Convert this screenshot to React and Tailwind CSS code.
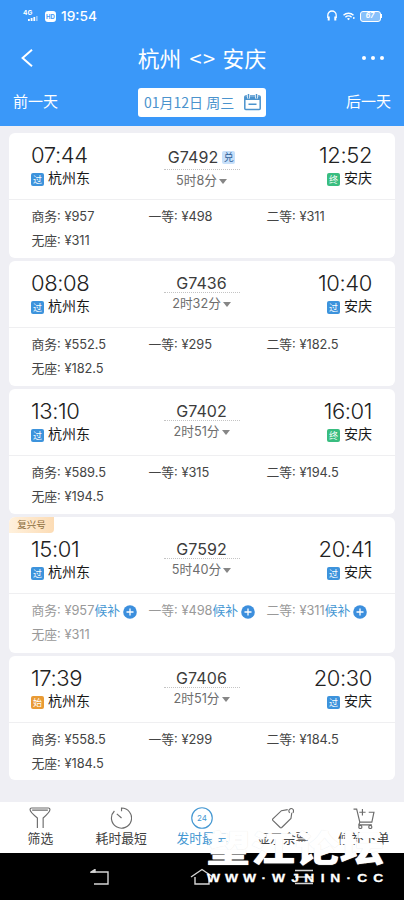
const trains = [
  {
    no: "G7492",
    exchange: true,
    duration: "5时8分",
    depart: "07:44",
    arrive: "12:52",
    fromTag: "过",
    toTag: "终",
    seats: [["商务", "957"], ["一等", "498"], ["二等", "311"], ["无座", "311"]],
    height: "h-[125px]",
  },
  {
    no: "G7436",
    duration: "2时32分",
    depart: "08:08",
    arrive: "10:40",
    fromTag: "过",
    toTag: "过",
    seats: [["商务", "552.5"], ["一等", "295"], ["二等", "182.5"], ["无座", "182.5"]],
    height: "h-[125px]",
  },
  {
    no: "G7402",
    duration: "2时51分",
    depart: "13:10",
    arrive: "16:01",
    fromTag: "过",
    toTag: "终",
    seats: [["商务", "589.5"], ["一等", "315"], ["二等", "194.5"], ["无座", "194.5"]],
    height: "h-[125px]",
  },
  {
    no: "G7592",
    fuxing: true,
    soldOut: true,
    duration: "5时40分",
    depart: "15:01",
    arrive: "20:41",
    fromTag: "过",
    toTag: "过",
    seats: [["商务", "957"], ["一等", "498"], ["二等", "311"], ["无座", "311"]],
    height: "h-[136px]",
  },
  {
    no: "G7406",
    duration: "2时51分",
    depart: "17:39",
    arrive: "20:30",
    fromTag: "始",
    toTag: "过",
    seats: [["商务", "558.5"], ["一等", "299"], ["二等", "184.5"], ["无座", "184.5"]],
    height: "h-[124px]",
  },
];

const tagColors = {
  过: "bg-[#3d93dc]",
  终: "bg-[#39bd80]",
  始: "bg-[#e99b35]",
};

function StatusBar() {
  return (
    <div className="flex h-8 items-center pr-[22px] pl-[23px] text-white">
      <div className="flex h-3 w-[15px] flex-col">
        <span className="h-[6px] text-[6.5px] leading-[6px] font-bold">4G</span>
        <svg className="ml-[5px] h-[5px] w-[10px]" viewBox="0 0 10 5" fill="currentColor">
          <path d="M0 3h1.8v2H0zM2.7 2h1.8v3H2.7zM5.4 1h1.8v4H5.4z" />
          <path d="M8.1 0h1.5v5H8.1z" opacity=".5" />
        </svg>
      </div>
      <span className="ml-[7px] flex h-[11px] w-[11px] items-center justify-center rounded-[3px] bg-white text-[6px] font-bold text-[#3a98f9]">
        HD
      </span>
      <span className="mt-[1px] ml-[5px] text-[13.7px] leading-none font-medium">19:54</span>
      <div className="ml-auto flex items-center">
        <svg className="h-3 w-[10px]" viewBox="0 0 10 12" fill="none" stroke="currentColor" strokeWidth="1.3">
          <path d="M.8 8V5.2a4.2 4.2 0 0 1 8.4 0V8" />
          <path d="M1.7 6.5v4M8.3 6.5v4" strokeWidth="2" />
        </svg>
        <svg className="ml-[6px] h-[9px] w-3" viewBox="0 0 12 9" fill="none" stroke="currentColor" strokeWidth="1.4">
          <path d="M.5 3.2a7.2 7.2 0 0 1 10 0M2.4 5.2a4.5 4.5 0 0 1 6.2 0" />
          <path d="M4 6.8a2.2 2.2 0 0 1 3 0L5.5 8.3z" fill="currentColor" stroke="none" />
          <circle cx="10.8" cy="6" r=".9" fill="currentColor" stroke="none" />
        </svg>
        <span className="ml-[5px] flex h-[11px] w-[21px] items-center justify-center rounded-[3px] border border-white bg-white/40 text-[7px] font-bold italic">
          67
        </span>
        <span className="h-1 w-[1.5px] bg-white" />
      </div>
    </div>
  );
}

function Header() {
  return (
    <header className="h-[126px] bg-[#3a98f9] text-white">
      <StatusBar />
      <div className="flex h-[52px] items-center justify-between pr-[20px] pl-[21px]">
        <svg className="h-[18px] w-3" viewBox="0 0 12 18" fill="none" stroke="currentColor" strokeWidth="2">
          <path d="M11 .8 1.6 9l9.4 8.2" />
        </svg>
        <h1 className="flex gap-[8px] pl-[9px] font-['Noto_Sans_CJK_SC'] text-[21.8px] leading-[54px]">
          <span>杭州</span>
          <span className="tracking-[1.5px]">&lt;&gt;</span>
          <span className="-ml-[2px]">安庆</span>
        </h1>
        <div className="flex gap-[5px]">
          <span className="h-1 w-1 rounded-full bg-white" />
          <span className="h-1 w-1 rounded-full bg-white" />
          <span className="h-1 w-1 rounded-full bg-white" />
        </div>
      </div>
      <div className="flex items-center justify-between px-[13px] pt-[4px] font-['Noto_Sans_CJK_SC'] text-[15px]">
        <span className="-mt-[3px] leading-[30px]">前一天</span>
        <div className="flex h-[29px] w-[128px] items-center justify-between rounded-[3px] bg-white pr-[5px] pl-[6px] text-[#4b93cd]">
          <span className="text-[14px] leading-[29px] whitespace-nowrap">01月12日 周三</span>
          <svg className="h-[17px] w-[17px]" viewBox="0 0 17 17" fill="none" stroke="currentColor" strokeWidth="1.5">
            <rect x=".8" y="2" width="15.4" height="13.6" rx="1" />
            <path d="M1 3h15v3H1z" fill="currentColor" stroke="none" />
            <path d="M4.5 0v4.5M12.5 0v4.5" stroke="#fff" strokeWidth="3" />
            <path d="M4.5 0v4.5M12.5 0v4.5M4.5 10.2h8" />
          </svg>
        </div>
        <span className="-mt-[3px] leading-[30px]">后一天</span>
      </div>
    </header>
  );
}

function Station({ tag, name }) {
  return (
    <div className="flex h-[19px] items-center gap-[4px]">
      <span
        className={`mt-[4px] flex h-[13px] w-[13px] items-center justify-center rounded-[2px] text-[9px] leading-none text-white ${tagColors[tag]}`}
      >
        {tag}
      </span>
      <span className="text-[14px] leading-[19px] text-[#181818]">{name}</span>
    </div>
  );
}

function Seat({ label, price, waitlist }) {
  return (
    <div className="flex h-[23.5px] items-center whitespace-nowrap">
      <span>
        {label}: ¥{price}
      </span>
      {waitlist && (
        <>
          <span className="text-[12.8px] text-[#4597d3]">候补</span>
          <svg className="mt-[2px] ml-[3px] h-[14px] w-[14px]" viewBox="0 0 14 14">
            <circle cx="7" cy="7" r="6.8" fill="#3c8fdd" />
            <path d="M3.5 7h7M7 3.5v7" stroke="#fff" strokeWidth="1.3" />
          </svg>
        </>
      )}
    </div>
  );
}

function TrainCard({ train }) {
  return (
    <section className={`flex shrink-0 flex-col rounded-[6px] bg-white ${train.height}`}>
      {train.fuxing && (
        <div className="-mb-[6px] flex h-[16px] w-[45px] shrink-0 items-center justify-center rounded-tl-[6px] rounded-br-[4px] bg-linear-to-r from-[#fff1dd] to-[#fcdcb5] text-[9.5px] leading-none text-[#8c6c3c]">
          复兴号
        </div>
      )}
      <div className="flex h-[67px] shrink-0 justify-between border-b border-[#efeff1] pr-[23px] pl-[22px]">
        <div className="w-[90px] pt-[10px]">
          <div className="h-[25px] text-[22px] leading-[25px] font-light tracking-[-0.4px] text-[#222]">
            {train.depart}
          </div>
          <Station tag={train.fromTag} name="杭州东" />
        </div>
        <div className={`flex w-[76px] flex-col items-center ${train.exchange ? "pt-[12px]" : "pt-[13px]"}`}>
          <div
            className={`flex w-full shrink-0 items-center justify-center border-b border-dotted border-[#c4c4c4] ${
              train.exchange ? "h-[25px]" : "h-[19px]"
            }`}
          >
            <span className="text-[16px] tracking-[0.1px] text-[#3c3c3c]">{train.no}</span>
            {train.exchange && (
              <span className="ml-[4px] flex h-[13px] w-[13px] shrink-0 items-center justify-center rounded-[2px] bg-[#c7e0fa] text-[10px] leading-none text-[#315f98]">
                兑
              </span>
            )}
          </div>
          <div className="flex h-[21px] items-center gap-[2px] text-[12.7px] text-[#6d6d6d]">
            <span>{train.duration}</span>
            <svg className="mt-[2px] h-[5px] w-2" viewBox="0 0 8 5" fill="#868686">
              <path d="M0 0h8L4 5z" />
            </svg>
          </div>
        </div>
        <div className="flex w-[90px] flex-col items-end pt-[10px]">
          <div className="h-[25px] text-[22px] leading-[25px] font-light tracking-[-0.4px] text-[#222]">
            {train.arrive}
          </div>
          <Station tag={train.toTag} name="安庆" />
        </div>
      </div>
      <div
        className={`grid grid-cols-[117px_118px_1fr] pt-[5px] pl-[22.5px] text-[12.8px] ${
          train.soldOut ? "text-[#999]" : "text-[#444]"
        }`}
      >
        {train.seats.map(([label, price]) => (
          <Seat key={label} label={label} price={price} waitlist={train.soldOut && label !== "无座"} />
        ))}
      </div>
    </section>
  );
}

const tabs = [
  {
    label: "筛选",
    icon: <path d="M8 20v-9.5Q1 5 1 2.5 1 1 2.5 1h16Q20 1 20 2.5q0 2.5-6.5 8V20M3 3h15" />,
  },
  {
    label: "耗时最短",
    icon: <path d="M11 4V1a9.6 9.6 0 1 1-6.8 2.8M6.5 6.5 11 10.5" />,
  },
  { label: "发时最早", active: true, icon: <circle cx="10.5" cy="10.5" r="9.8" /> },
  {
    label: "显示余票",
    icon: (
      <path d="M17 5.5q-2-2 .3-3.7 2-1 3 .8.6 1.5-.3 3M15 2.5 9 3.5.8 11.3q-.6.8 0 1.5l7 6.8q.8.6 1.5 0l8.8-8.6.8-5.5" />
    ),
  },
  {
    label: "候补下单",
    icon: (
      <>
        <path d="M.5 2h3l3 12.5h11.5L20 5h-5M6 5h6M9 2v6M6.5 14.5l-1 2.5H18" />
        <circle cx="7" cy="19" r="1.5" />
        <circle cx="16.5" cy="19" r="1.5" />
      </>
    ),
  },
];

function TabBar() {
  return (
    <nav className="grid h-[51px] grid-cols-5 bg-white">
      {tabs.map((tab) => (
        <div
          key={tab.label}
          className={`flex flex-col items-center pt-[5px] ${tab.active ? "text-[#4598d2]" : "text-[#3d3d3d]"}`}
        >
          <div className="relative h-[22px] w-[22px]">
            <svg
              className={tab.active ? "h-[22px] w-[22px]" : "h-[22px] w-[22px] text-[#6c6c6c]"}
              viewBox="0 0 21 21"
              fill="none"
              stroke="currentColor"
              strokeWidth="1.1"
            >
              {tab.icon}
            </svg>
            {tab.active && (
              <span className="absolute inset-0 flex items-center justify-center text-[8px]">24</span>
            )}
          </div>
          <span className="text-[12.8px] leading-[19px] whitespace-nowrap">{tab.label}</span>
        </div>
      ))}
    </nav>
  );
}

function SystemNav() {
  return (
    <div className="grid h-[47px] grid-cols-[1fr_1fr_1fr] items-center justify-items-center bg-black text-[#d5d5d5]">
      <svg className="ml-[66px] h-4 w-5" viewBox="0 0 20 16" fill="none" stroke="currentColor" strokeWidth="1.4">
        <path d="M1 3h17v12H4" />
        <path d="M1 3l4-2.5V3z" fill="currentColor" />
      </svg>
      <svg className="h-[18px] w-6" viewBox="0 0 24 18" fill="none" stroke="currentColor" strokeWidth="1.4">
        <path d="M1 9 12 1.5 23 9M5 9v7h14V9" />
      </svg>
      <svg className="mr-[65px] h-4 w-[18px]" viewBox="0 0 18 16" fill="none" stroke="currentColor" strokeWidth="1.4">
        <path d="M0 1.5h18M0 8h18M0 14.5h18" />
      </svg>
    </div>
  );
}

function Watermark() {
  return (
    <div className="absolute bottom-[16px] left-[206px] w-[178px] text-white">
      <div className="h-[38px] origin-top scale-y-[0.82] font-['Noto_Sans_CJK_SC'] text-[44.5px] leading-[30px] font-black whitespace-nowrap [text-shadow:0_0_1px_#e4e4e4]">
        望江论坛
      </div>
      <div className="flex h-[12px] items-center justify-between px-[2px] font-['Liberation_Sans'] text-[11.5px] leading-[12px] font-bold [-webkit-text-stroke:0.3px_white]">
        {"WWW·WJNIN·CC".split("").map((char, i) => (
          <span key={i} className="scale-x-[1.2]">
            {char}
          </span>
        ))}
      </div>
    </div>
  );
}

export default function App() {
  return (
    <div className="relative flex h-[900px] w-[404px] flex-col overflow-hidden bg-[#efeff4] font-['Inter','Noto_Sans_CJK_SC',sans-serif]">
      <Header />
      <main className="flex flex-1 flex-col gap-[3px] px-[9px] pt-[7px]">
        {trains.map((train) => (
          <TrainCard key={train.no} train={train} />
        ))}
      </main>
      <TabBar />
      <SystemNav />
      <Watermark />
    </div>
  );
}
